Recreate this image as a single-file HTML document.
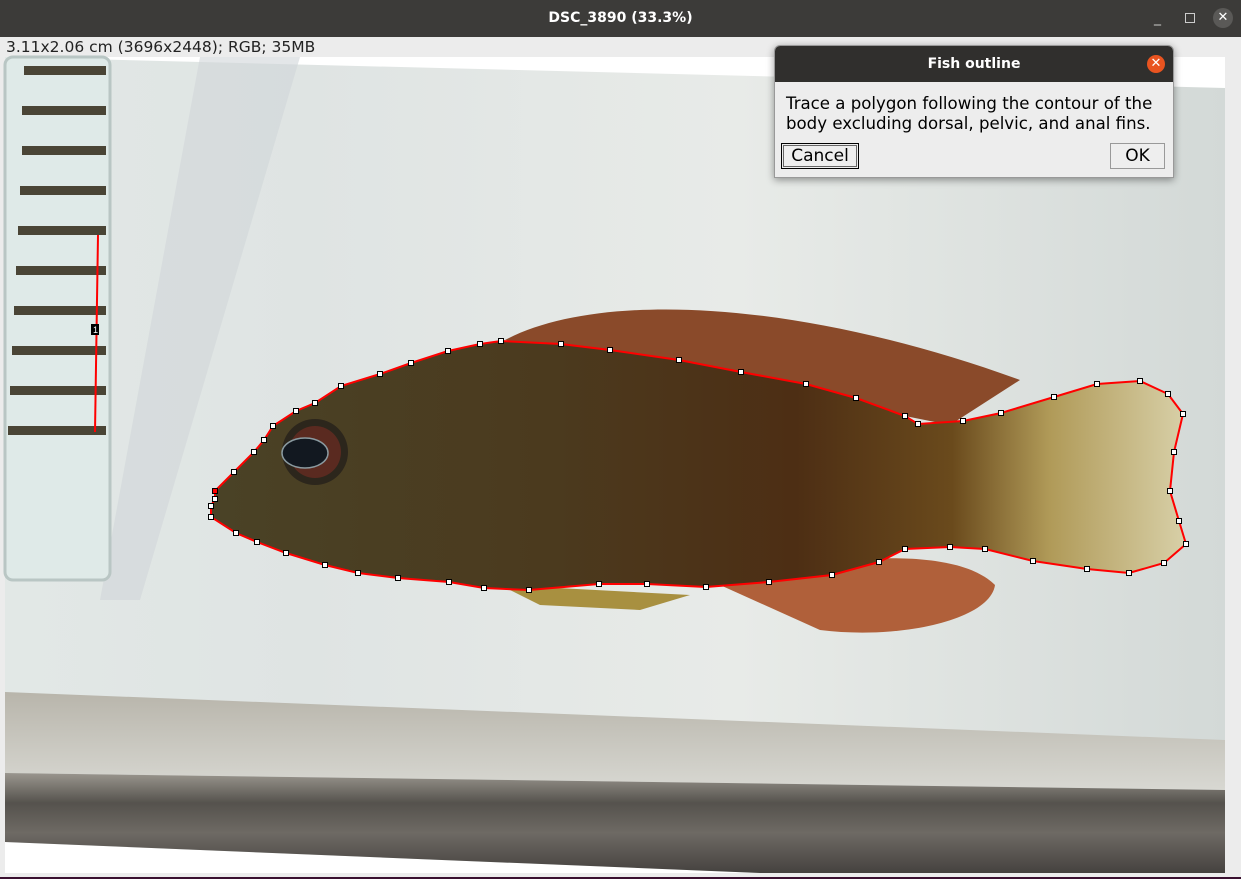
<!DOCTYPE html>
<html><head><meta charset="utf-8"><style>
body{margin:0;width:1241px;height:879px;overflow:hidden;background:#ececec;font-family:"Liberation Sans","DejaVu Sans",sans-serif;position:relative}
.tb{position:absolute;left:0;top:0;width:1241px;height:37px;background:#3c3b39;color:#fff;font:bold 14px "DejaVu Sans",sans-serif;text-align:center;line-height:37px}
.info{position:absolute;left:6px;top:38px;font:15.5px "DejaVu Sans",sans-serif;color:#222}
.dlg{position:absolute;left:774px;top:45px;width:398px;height:131px;background:#ededed;border:1px solid #999;border-radius:6px 6px 0 0;box-shadow:0 2px 8px rgba(0,0,0,.4);overflow:hidden}
.dh{height:36px;background:#302f2d;color:#fff;font:bold 14px "DejaVu Sans",sans-serif;text-align:center;line-height:37px;position:relative}
.dx{position:absolute;right:8px;top:9px;width:18px;height:18px;border-radius:50%;background:#e95420;color:#fff;font-size:13px;line-height:18px}
.dt{font:16.6px "DejaVu Sans",sans-serif;color:#000;padding:12px 0 0 11px;line-height:20px;white-space:nowrap}
.btn{position:absolute;top:97px;height:24px;background:#eee;border:1px solid #999;font:17px "DejaVu Sans",sans-serif;text-align:center;line-height:24px}
</style></head><body>
<div class="tb">DSC_3890 (33.3%)
<span style="position:absolute;right:80px;top:0;font-weight:normal;color:#ccc">_</span>
<span style="position:absolute;right:46px;top:13px;width:8px;height:8px;border:1px solid #ccc"></span>
<span style="position:absolute;right:8px;top:8px;width:20px;height:20px;border-radius:50%;background:#5a5957;line-height:20px;font-size:13px;font-weight:normal">✕</span></div>
<div class="info">3.11x2.06 cm (3696x2448); RGB; 35MB</div>
<svg style="position:absolute;left:0;top:0" width="1241" height="879">
<defs>
<linearGradient id="bg" x1="0" y1="0" x2="1" y2="0"><stop offset="0" stop-color="#e2e8e6"/><stop offset=".25" stop-color="#dfe4e3"/><stop offset=".6" stop-color="#e8ebe8"/><stop offset="1" stop-color="#d3d9d7"/></linearGradient>
<linearGradient id="body" x1="0" y1="0" x2="1" y2="0"><stop offset="0" stop-color="#4a4226"/><stop offset=".35" stop-color="#4b3a1e"/><stop offset=".6" stop-color="#4d2e14"/><stop offset=".76" stop-color="#6a4a1c"/><stop offset=".86" stop-color="#b09a58"/><stop offset="1" stop-color="#d8d0a8"/></linearGradient>
<linearGradient id="gray" x1="0" y1="0" x2="0" y2="1"><stop offset="0" stop-color="#b8b5ab"/><stop offset="1" stop-color="#d8d8d2"/></linearGradient>
<linearGradient id="dk" x1="0" y1="0" x2="0" y2="1"><stop offset="0" stop-color="#9a968e"/><stop offset=".3" stop-color="#55524d"/><stop offset=".6" stop-color="#6e6a64"/><stop offset="1" stop-color="#45423f"/></linearGradient>
</defs>
<rect x="5" y="57" width="1220" height="816" fill="#fff"/>
<polygon points="5,57 1225,88 1225,873 760,873 5,842" fill="url(#bg)"/>
<polygon points="200,57 300,57 140,600 100,600" fill="#d0d6d8" opacity=".6"/>
<polygon points="5,692 1225,740 1225,790 5,773" fill="url(#gray)"/>
<polygon points="5,773 1225,790 1225,873 760,873 5,842" fill="url(#dk)"/>
<rect x="5" y="57" width="105" height="523" rx="8" fill="#dfeae8" stroke="#b9c6c4" stroke-width="3"/>
<g fill="#4a4536">
<rect x="24" y="66" width="82" height="9"/><rect x="22" y="106" width="84" height="9"/><rect x="22" y="146" width="84" height="9"/><rect x="20" y="186" width="86" height="9"/><rect x="18" y="226" width="88" height="9"/><rect x="16" y="266" width="90" height="9"/><rect x="14" y="306" width="92" height="9"/><rect x="12" y="346" width="94" height="9"/><rect x="10" y="386" width="96" height="9"/><rect x="8" y="426" width="98" height="9"/>
</g>
<line x1="98" y1="235" x2="95" y2="432" stroke="red" stroke-width="2"/>
<rect x="91" y="324" width="8" height="11" fill="#000"/><text x="93" y="333" font-size="9" fill="#fff">1</text>
<path d="M505,340 C600,290 800,300 1020,380 L950,425 L905,416 Z" fill="#8a4a2a"/>
<path d="M720,585 C800,560 950,540 995,585 C990,620 900,640 820,630 Z" fill="#b0603a"/>
<path d="M500,585 L690,595 L640,610 L540,605 Z" fill="#a89040"/>
<polygon fill="url(#body)" points="215,491 234,472 254,452 264,440 273,426 296,411 315,403 341,386 380,374 411,363 448,351 480,344 501,341 561,344 610,350 679,360 741,372 806,384 856,398 905,416 918,424 963,421 1001,413 1054,397 1097,384 1140,381 1168,394 1183,414 1174,452 1170,491 1179,521 1186,544 1164,563 1129,573 1087,569 1033,561 985,549 950,547 905,549 879,562 832,575 769,582 706,587 647,584 599,584 529,590 484,588 449,582 398,578 358,573 325,565 286,553 257,542 236,533 211,517 211,506 215,499"/>
<circle cx="315" cy="452" r="33" fill="#2c261c"/>
<circle cx="315" cy="452" r="26" fill="#5a2a20"/>
<ellipse cx="305" cy="453" rx="23" ry="15" fill="#121820" stroke="#8a9aa0" stroke-width="1.5"/>
<polyline fill="none" stroke="red" stroke-width="2" points="215,491 234,472 254,452 264,440 273,426 296,411 315,403 341,386 380,374 411,363 448,351 480,344 501,341 561,344 610,350 679,360 741,372 806,384 856,398 905,416 918,424 963,421 1001,413 1054,397 1097,384 1140,381 1168,394 1183,414 1174,452 1170,491 1179,521 1186,544 1164,563 1129,573 1087,569 1033,561 985,549 950,547 905,549 879,562 832,575 769,582 706,587 647,584 599,584 529,590 484,588 449,582 398,578 358,573 325,565 286,553 257,542 236,533 211,517 211,506 215,499 215,491"/>
<g fill="#fff" stroke="#000" stroke-width="1">
<path d="M231.5,469.5h5v5h-5zM251.5,449.5h5v5h-5zM261.5,437.5h5v5h-5zM270.5,423.5h5v5h-5zM293.5,408.5h5v5h-5zM312.5,400.5h5v5h-5zM338.5,383.5h5v5h-5zM377.5,371.5h5v5h-5zM408.5,360.5h5v5h-5zM445.5,348.5h5v5h-5zM477.5,341.5h5v5h-5zM498.5,338.5h5v5h-5zM558.5,341.5h5v5h-5zM607.5,347.5h5v5h-5zM676.5,357.5h5v5h-5zM738.5,369.5h5v5h-5zM803.5,381.5h5v5h-5zM853.5,395.5h5v5h-5zM902.5,413.5h5v5h-5zM915.5,421.5h5v5h-5zM960.5,418.5h5v5h-5zM998.5,410.5h5v5h-5zM1051.5,394.5h5v5h-5zM1094.5,381.5h5v5h-5zM1137.5,378.5h5v5h-5zM1165.5,391.5h5v5h-5zM1180.5,411.5h5v5h-5zM1171.5,449.5h5v5h-5zM1167.5,488.5h5v5h-5zM1176.5,518.5h5v5h-5zM1183.5,541.5h5v5h-5zM1161.5,560.5h5v5h-5zM1126.5,570.5h5v5h-5zM1084.5,566.5h5v5h-5zM1030.5,558.5h5v5h-5zM982.5,546.5h5v5h-5zM947.5,544.5h5v5h-5zM902.5,546.5h5v5h-5zM876.5,559.5h5v5h-5zM829.5,572.5h5v5h-5zM766.5,579.5h5v5h-5zM703.5,584.5h5v5h-5zM644.5,581.5h5v5h-5zM596.5,581.5h5v5h-5zM526.5,587.5h5v5h-5zM481.5,585.5h5v5h-5zM446.5,579.5h5v5h-5zM395.5,575.5h5v5h-5zM355.5,570.5h5v5h-5zM322.5,562.5h5v5h-5zM283.5,550.5h5v5h-5zM254.5,539.5h5v5h-5zM233.5,530.5h5v5h-5zM208.5,514.5h5v5h-5zM208.5,503.5h5v5h-5zM212.5,496.5h5v5h-5z"/>
<rect x="212.5" y="488.5" width="5" height="5" fill="red"/>
</g>
<rect x="0" y="873" width="1241" height="6" fill="#ececec"/><rect x="0" y="877" width="1241" height="2" fill="#3a1030"/>
</svg>
<div class="dlg"><div class="dh">Fish outline<span class="dx">✕</span></div>
<div class="dt">Trace a polygon following the contour of the<br>body excluding dorsal, pelvic, and anal fins.</div>
<div class="btn" style="left:6px;width:76px;border:1px solid #000;outline:1px solid #666;outline-offset:-3px">Cancel</div>
<div class="btn" style="left:335px;width:53px">OK</div></div>
</body></html>
